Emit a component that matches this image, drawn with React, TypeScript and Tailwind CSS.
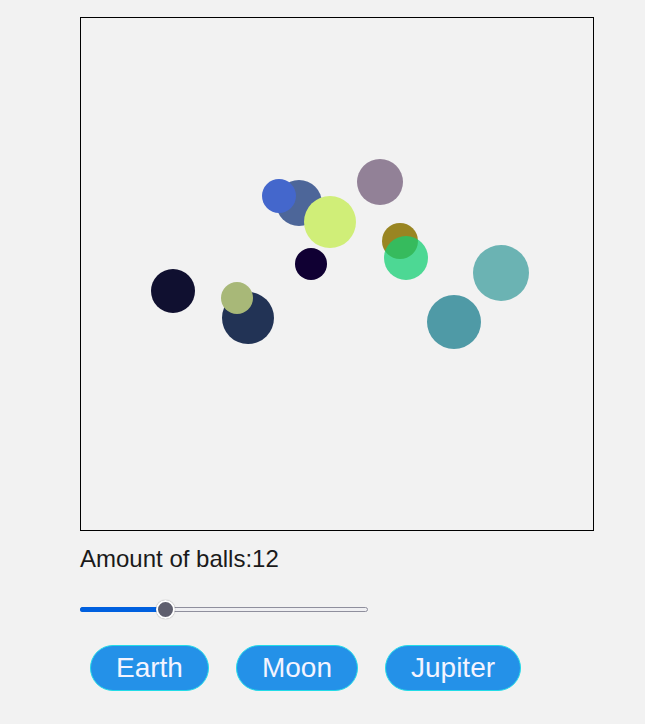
import React from "react";

// Balls as drawn on the 512x512 canvas
const balls = [
  { x: 218, y: 185, r: 23, color: "#4d6699" },
  { x: 198, y: 178, r: 17, color: "#4467cc" },
  { x: 249, y: 204, r: 26, color: "#d0ee78" },
  { x: 299, y: 164, r: 23, color: "#928197" },
  { x: 319, y: 223, r: 18, color: "#998522" },
  { x: 325, y: 240, r: 22, color: "#13cf73", opacity: 0.74 },
  { x: 230, y: 246, r: 16, color: "#100033" },
  { x: 92, y: 273, r: 22, color: "#101030" },
  { x: 167, y: 300, r: 26, color: "#223355" },
  { x: 156, y: 280, r: 16, color: "#a8b878" },
  { x: 420, y: 255, r: 28, color: "#6bb3b3" },
  { x: 373, y: 304, r: 27, color: "#4f9aa6" },
];

const planets = ["Earth", "Moon", "Jupiter"];

function Slider({ percent }: { percent: number }) {
  return (
    <div className="relative w-[288px] h-5 flex items-center">
      <div className="w-full h-[5px] rounded-full bg-[#efeff2] border border-[#8f8f9d]" />
      <div
        className="absolute left-0 h-[5px] rounded-l-full bg-[#0060df]"
        style={{ width: `${percent}%` }}
      />
      <div
        className="absolute w-[19px] h-[19px] rounded-full bg-[#5f5f6e] border-2 border-white shadow-[0_0_1px_rgba(0,0,0,0.5)]"
        style={{ left: `calc(${percent}% - 9.5px)` }}
      />
    </div>
  );
}

export default function App() {
  return (
    <div className="min-h-[724px] bg-[#f2f2f2] pl-[80px] pt-[17px] font-['Liberation_Sans',Arial,sans-serif] text-[#1a1a1a]">
      <svg
        width={512}
        height={512}
        className="block box-content border border-black"
      >
        {balls.map((b, i) => (
          <circle
            key={i}
            cx={b.x}
            cy={b.y}
            r={b.r}
            fill={b.color}
            fillOpacity={b.opacity ?? 1}
          />
        ))}
      </svg>

      <p className="mt-[14px] text-[24px] leading-[28px]">Amount of balls:12</p>

      <div className="mt-[26px]">
        <Slider percent={29.7} />
      </div>

      <div className="mt-[26px] ml-[10px] flex gap-[27px]">
        {planets.map((p) => (
          <button
            key={p}
            className="rounded-full bg-[#2491e8] border border-[#22dce8] text-[#f4f4ff] text-[28px] leading-[32px] px-[25px] py-[6px]"
          >
            {p}
          </button>
        ))}
      </div>
    </div>
  );
}
